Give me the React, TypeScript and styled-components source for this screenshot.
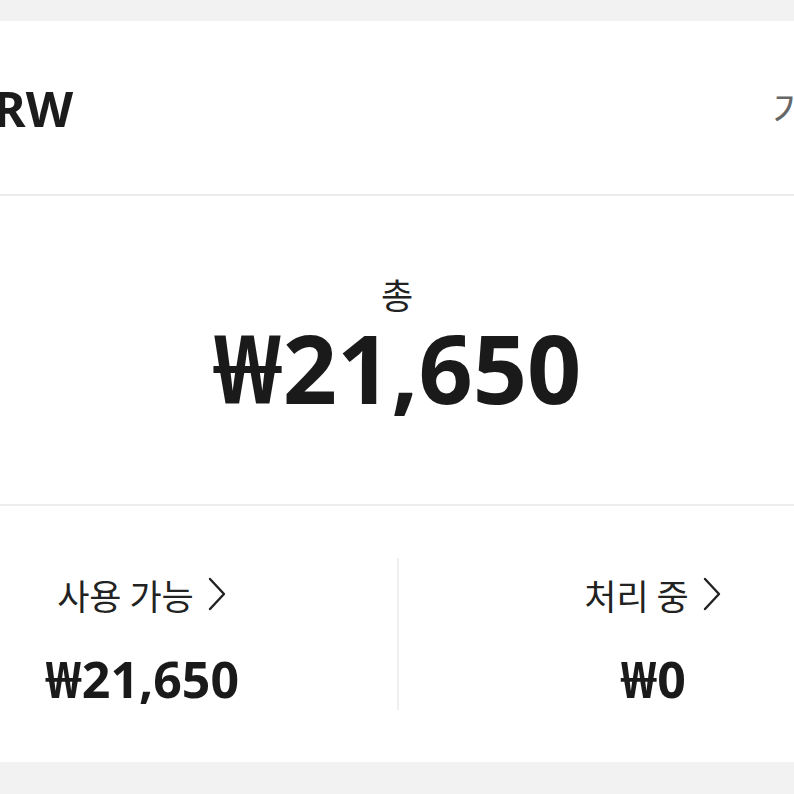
import React from "react";
import styled, { createGlobalStyle } from "styled-components";

const Global = createGlobalStyle`
  html, body { margin: 0; padding: 0; background: #f2f2f2; }
  body { font-family: "Noto Sans", "Noto Sans CJK KR", sans-serif; color: #1c1c1c; }
  #root { width: 794px; height: 794px; overflow: hidden; }
`;

const Page = styled.div`
  width: 794px;
  height: 794px;
  overflow: hidden;
  background: #f2f2f2;
  padding-top: 21px;
  box-sizing: border-box;
`;

const Wide = styled.div`
  width: 1020px;
  margin-left: -113px;
  background: #ffffff;
  display: flex;
  flex-direction: column;
`;

const Header = styled.header`
  height: 173px;
  display: flex;
  align-items: center;
  justify-content: space-between;
  padding: 0 0 0 74px;
  border-bottom: 2px solid #ececec;
`;

const Title = styled.h1`
  margin: 0;
  font-size: 49px;
  font-weight: 700;
  color: #1c1c1c;
`;

const Action = styled.span`
  font-family: "Noto Sans CJK KR", sans-serif;
  font-size: 38px;
  color: #666;
  width: 134px;
  overflow: hidden;
  white-space: nowrap;
`;

const TotalSection = styled.section`
  height: 310px;
  display: flex;
  flex-direction: column;
  align-items: center;
  justify-content: center;
  padding-bottom: 14px;
  border-bottom: 2px solid #ededed;
  box-sizing: border-box;
`;

const Label = styled.div`
  font-family: "Noto Sans CJK KR", sans-serif;
  font-size: 35px;
  line-height: 1;
  color: #222;
  display: flex;
  align-items: center;
  gap: 13px;
`;

const TotalAmount = styled.div`
  font-size: 95px;
  font-weight: 700;
  line-height: 0.9;
  margin-top: 14px;
  color: #1a1a1a;
`;

const Split = styled.section`
  height: 256px;
  display: grid;
  grid-template-columns: 1fr 1fr;
  align-items: center;
`;

const Column = styled.div<{ $divider?: boolean }>`
  height: 152px;
  box-sizing: border-box;
  padding-top: 12px;
  display: flex;
  flex-direction: column;
  align-items: center;
  justify-content: center;
  gap: 42px;
  border-left: ${(p) => (p.$divider ? "2px solid #efefef" : "none")};
`;

const SubAmount = styled.div`
  font-size: 50px;
  font-weight: 700;
  line-height: 1;
  color: #1a1a1a;
`;

const Chevron = () => (
  <svg width="20" height="34" viewBox="0 0 20 34" fill="none">
    <polyline points="3,2 17,17 3,32" stroke="#222" strokeWidth="2.4" strokeLinecap="round" strokeLinejoin="round" />
  </svg>
);

export default function App() {
  return (
    <Page>
      <Global />
      <Wide>
        <Header>
          <Title>KRW</Title>
          <Action>가이드</Action>
        </Header>
        <TotalSection>
          <Label>총</Label>
          <TotalAmount>₩21,650</TotalAmount>
        </TotalSection>
        <Split>
          <Column>
            <Label>사용 가능 <Chevron /></Label>
            <SubAmount>₩21,650</SubAmount>
          </Column>
          <Column $divider>
            <Label>처리 중 <Chevron /></Label>
            <SubAmount>₩0</SubAmount>
          </Column>
        </Split>
      </Wide>
    </Page>
  );
}
